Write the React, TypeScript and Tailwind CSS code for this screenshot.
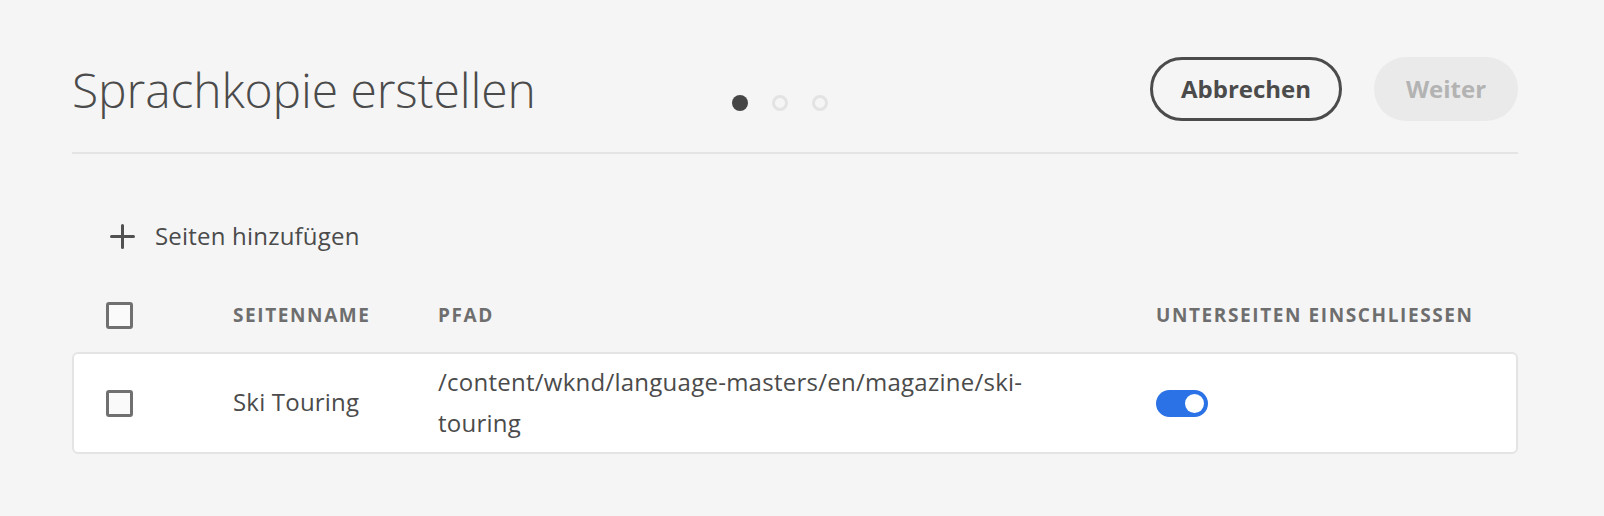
import React from 'react'

const font = { fontFamily: '"Open Sans", "Noto Sans", sans-serif' }

const Checkbox: React.FC = () => (
  <div className="w-[27px] h-[27px] rounded-[3px] border-[3px] border-[#707070] bg-[#fafafa]" />
)

const Toggle: React.FC = () => (
  <div className="w-[52px] h-[27px] rounded-full bg-[#2a72e5] flex items-center justify-end pr-[4px]">
    <div className="w-[19px] h-[19px] rounded-full bg-white" />
  </div>
)

const App: React.FC = () => {
  return (
    <div className="w-full h-[516px] bg-[#f5f5f5] pl-[72px] pr-[86px] pt-[57px] overflow-hidden" style={font}>
      {/* Kopfzeile */}
      <div className="flex items-start h-[64px]">
        <h1 className="w-[660px] text-[48px] font-light leading-[64px] tracking-[-0.1px] text-[#4b4b4b] mt-[1px]">
          Sprachkopie erstellen
        </h1>
        <div className="flex items-center gap-[24px] mt-[38px]">
          <div className="w-[16px] h-[16px] rounded-full bg-[#464646]" />
          <div className="w-[16px] h-[16px] rounded-full border-[3px] border-[#e3e3e3]" />
          <div className="w-[16px] h-[16px] rounded-full border-[3px] border-[#e3e3e3]" />
        </div>
        <div className="flex-1" />
        <div className="flex items-center gap-[32px]">
          <button className="w-[192px] h-[64px] rounded-full border-[3px] border-[#4b4b4b] text-[24px] font-bold text-[#4b4b4b]">
            Abbrechen
          </button>
          <button className="w-[144px] h-[64px] rounded-full bg-[#eaeaea] text-[24px] font-bold text-[#b3b3b3]">
            Weiter
          </button>
        </div>
      </div>

      <div className="mt-[31px] h-[2px] bg-[#e4e4e4]" />

      {/* Seiten hinzufügen */}
      <div className="mt-[62px] h-[40px] flex items-center pl-[38px] gap-[20px] text-[#4b4b4b]">
        <svg width="25" height="25" viewBox="0 0 25 25">
          <path d="M12.5 1.5v22M1.5 12.5h22" stroke="#505050" strokeWidth="3" strokeLinecap="round" />
        </svg>
        <span className="text-[24px] tracking-[0.2px]">Seiten hinzufügen</span>
      </div>

      {/* Tabellenkopf */}
      <div className="mt-[39px] h-[40px] flex items-center pl-[34px] text-[19px] font-bold tracking-[1.6px] text-[#6e6e6e]">
        <div className="w-[127px]">
          <Checkbox />
        </div>
        <div className="w-[205px]">SEITENNAME</div>
        <div className="w-[718px]">PFAD</div>
        <div>UNTERSEITEN EINSCHLIESSEN</div>
      </div>

      {/* Zeile */}
      <div className="mt-[17px] h-[102px] rounded-[6px] border-2 border-[#e4e4e4] bg-white flex items-center pl-[32px] text-[24px] text-[#4b4b4b]">
        <div className="w-[127px]">
          <Checkbox />
        </div>
        <div className="w-[205px] -mt-[2px] tracking-[0.2px]">Ski Touring</div>
        <div className="w-[718px] leading-[41px] -mt-[2px] tracking-[0.25px]">
          /content/wknd/language-masters/en/magazine/ski-
          <br />
          touring
        </div>
        <Toggle />
      </div>
    </div>
  )
}

export default App
